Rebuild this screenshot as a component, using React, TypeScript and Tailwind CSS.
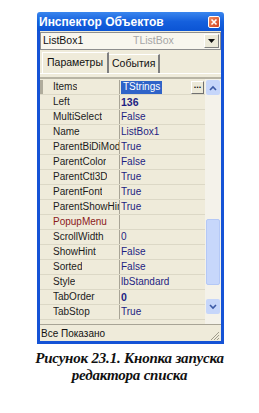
import React from "react";

const rows: { name: string; value: string; kind?: "bold" | "red" | "sel" }[] = [
  { name: "Items", value: "TStrings", kind: "sel" },
  { name: "Left", value: "136", kind: "bold" },
  { name: "MultiSelect", value: "False" },
  { name: "Name", value: "ListBox1" },
  { name: "ParentBiDiMode", value: "True" },
  { name: "ParentColor", value: "False" },
  { name: "ParentCtl3D", value: "True" },
  { name: "ParentFont", value: "True" },
  { name: "ParentShowHint", value: "True" },
  { name: "PopupMenu", value: "", kind: "red" },
  { name: "ScrollWidth", value: "0" },
  { name: "ShowHint", value: "False" },
  { name: "Sorted", value: "False" },
  { name: "Style", value: "lbStandard" },
  { name: "TabOrder", value: "0", kind: "bold" },
  { name: "TabStop", value: "True" },
];

const font = { fontFamily: '"Liberation Sans", Arial, sans-serif' };

export default function App() {
  return (
    <div className="w-[259px] h-[413px] bg-white overflow-hidden" style={font}>
      <div className="ml-[37px] mt-[12px] w-[187px] flex flex-col">
        {/* title bar */}
        <div className="h-[19px] flex items-center justify-between pl-[2px] pr-[4px] bg-gradient-to-b from-[#3a86ee] via-[#1560dd] to-[#0b54d4] rounded-t-[3px]">
          <span className="text-white font-bold text-[12px] leading-none">Инспектор Объектов</span>
          <div className="w-[12px] h-[12px] rounded-[2px] border border-white bg-gradient-to-br from-[#f08a5d] to-[#d2401e] flex items-center justify-center">
            <svg width="8" height="8" viewBox="0 0 8 8">
              <path d="M1.5 1.5 L6.5 6.5 M6.5 1.5 L1.5 6.5" stroke="white" strokeWidth="1.6" />
            </svg>
          </div>
        </div>
        {/* body */}
        <div className="border-x-[3px] border-b-[3px] border-[#1553d6] bg-[#efebda] flex flex-col">
          {/* combo */}
          <div className="mt-[1px] h-[18px] border border-[#8e8e8e] bg-[#f8f6ee] flex items-center text-[10.5px] text-[#111]">
            <span className="pl-[2px] w-[92px]">ListBox1</span>
            <span className="text-[#a6a6a6] flex-1">TListBox</span>
            <div className="w-[15px] h-[14px] mr-[1px] bg-[#ece9d8] border border-t-white border-l-white border-r-[#808080] border-b-[#808080] flex items-center justify-center">
              <svg width="7" height="4" viewBox="0 0 7 4"><path d="M0 0 H7 L3.5 4 Z" fill="#111" /></svg>
            </div>
          </div>
          {/* tabs */}
          <div className="mt-[3px] h-[21px] flex items-end pl-[2px] border-b border-white">
            <div className="h-[21px] pl-[4px] pr-[4px] flex items-center text-[10.5px] text-[#111] border-l border-t border-white border-r-2 border-r-[#7f7f7f]">
              Параметры
            </div>
            <div className="h-[19px] px-[3px] flex items-center text-[10.5px] text-[#111] border-t border-white border-r-2 border-r-[#7f7f7f]">
              События
            </div>
          </div>
          {/* grid */}
          <div className="mt-[3px] h-[247px] border-t-2 border-t-[#b8b4a4] flex">
            <div className="flex-1 flex flex-col pt-[1px]">
              {rows.map((r, i) => (
                <div key={r.name} className="h-[15px] flex border-b border-[#dcd8c6] text-[10px] leading-none">
                  <div className={`w-[80px] shrink-0 flex items-center overflow-hidden whitespace-nowrap border-r border-[#a8a496] ${i === 0 ? "border-l-[3px] border-l-[#b0ac9c] pl-[10px]" : "pl-[13px]"} ${r.kind === "red" ? "text-[#8b1a1a]" : "text-[#1c1c1c]"}`}>
                    <span className="block overflow-hidden">{r.name}</span>
                  </div>
                  <div className="flex-1 flex items-center pl-[1px] relative text-[#1e1e82]">
                    {r.kind === "sel" ? (
                      <>
                        <span className="bg-[#2f63c8] text-white h-[13px] px-[2px] flex items-center">{r.value}</span>
                        <div className="absolute right-[1px] top-[1px] w-[13px] h-[13px] bg-[#ece9d8] border border-t-white border-l-white border-r-[#707070] border-b-[#707070] flex items-center justify-center">
                          <span className="text-[#111] text-[9px] font-bold leading-none -mt-[4px]">...</span>
                        </div>
                      </>
                    ) : (
                      <span className={r.kind === "bold" ? "font-bold text-[10.5px]" : ""}>{r.value}</span>
                    )}
                  </div>
                </div>
              ))}
            </div>
            {/* scrollbar */}
            <div className="w-[16px] shrink-0 flex flex-col bg-[#f4f2ea] pt-[1px]">
              <div className="h-[15px] mx-[1px] bg-[#c6d6fa] rounded-[2px] flex items-center justify-center">
                <svg width="8" height="6" viewBox="0 0 8 6"><path d="M1 5 L4 2 L7 5" stroke="#3c5aa6" strokeWidth="1.6" fill="none" /></svg>
              </div>
              <div className="h-[124px]" />
              <div className="h-[66px] mx-[1px] bg-[#c7d7fb] rounded-[2px] border border-[#b4c8f6]" />
              <div className="flex-1" />
              <div className="h-[15px] mx-[1px] mb-[10px] bg-[#c6d6fa] rounded-[2px] flex items-center justify-center">
                <svg width="8" height="6" viewBox="0 0 8 6"><path d="M1 1 L4 4 L7 1" stroke="#3c5aa6" strokeWidth="1.6" fill="none" /></svg>
              </div>
            </div>
          </div>
          {/* status */}
          <div className="h-[17px] border-t border-[#a8a496] flex items-center justify-between text-[10px] text-[#111]">
            <span className="pl-[1px]">Все Показано</span>
            <svg width="11" height="11" viewBox="0 0 11 11" className="mr-[1px] mt-[4px]">
              <path d="M10 2 L2 10 M10 5 L5 10 M10 8 L8 10" stroke="#a09c8c" strokeWidth="1" />
            </svg>
          </div>
        </div>
      </div>
      {/* caption */}
      <div
        className="mt-[6px] text-center font-bold italic text-[15px] leading-[16.5px] text-[#111] tracking-[-0.2px]"
        style={{ fontFamily: '"Liberation Serif", "Times New Roman", serif' }}
      >
        Рисунок 23.1. Кнопка запуска
        <br />
        редактора списка
      </div>
    </div>
  );
}
